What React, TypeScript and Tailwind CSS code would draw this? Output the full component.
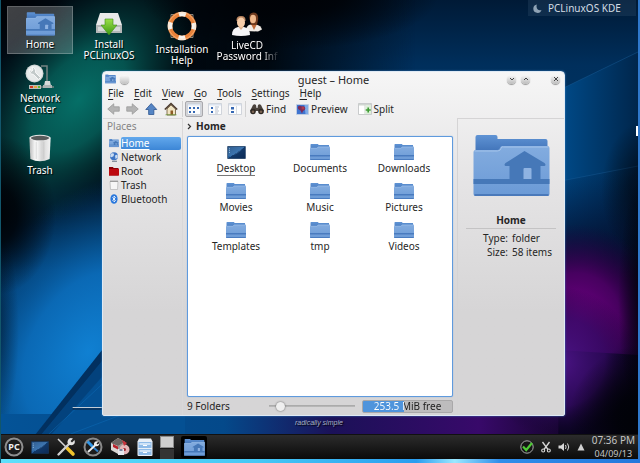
import type { ReactNode } from 'react';

const places = ['Home', 'Network', 'Root', 'Trash', 'Bluetooth'];

const files = [
  'Desktop', 'Documents', 'Downloads',
  'Movies', 'Music', 'Pictures',
  'Templates', 'tmp', 'Videos',
];

const menus = ['File', 'Edit', 'View', 'Go', 'Tools', 'Settings', 'Help'];

/* ---------- gradients shared by the icons ---------- */

function Defs() {
  return (
    <svg className="absolute w-0 h-0" aria-hidden="true">
      <defs>
        <linearGradient id="folderFront" x1="0" y1="0" x2="0" y2="1">
          <stop offset="0" stopColor="#83acdf" />
          <stop offset="1" stopColor="#6b9ad6" />
        </linearGradient>
        <linearGradient id="folderBack" x1="0" y1="0" x2="0" y2="1">
          <stop offset="0" stopColor="#5f93d4" />
          <stop offset="1" stopColor="#3b6db3" />
        </linearGradient>
        <linearGradient id="metal" x1="0" y1="0" x2="1" y2="0">
          <stop offset="0" stopColor="#b9b9b9" />
          <stop offset="0.3" stopColor="#ffffff" />
          <stop offset="0.6" stopColor="#d4d4d4" />
          <stop offset="1" stopColor="#f4f4f4" />
        </linearGradient>
        <linearGradient id="screen" x1="0" y1="0" x2="1" y2="1">
          <stop offset="0" stopColor="#163d6d" />
          <stop offset="0.5" stopColor="#2a66a4" />
          <stop offset="0.51" stopColor="#12396a" />
          <stop offset="1" stopColor="#0c2a55" />
        </linearGradient>
        <linearGradient id="greenArrow" x1="0" y1="0" x2="0" y2="1">
          <stop offset="0" stopColor="#9be04a" />
          <stop offset="1" stopColor="#3f9a12" />
        </linearGradient>
      </defs>
    </svg>
  );
}

/* ---------- icons ---------- */

function Folder({ className }: { className: string }) {
  return (
    <svg viewBox="0 0 20 18" className={className} aria-hidden="true">
      <path d="M.5 1.500 1 1h7l.6 1H19v8H.5z" fill="url(#folderBack)" />
      <path d="M0 5h7l1-1.300h12V16.400l-.6.6H.6L0 16.400z" fill="url(#folderFront)" />
      <path d="M0 12.200h20v1.200H0z" fill="#3f72b8" />
      <path d="M.3 16.500h19.400" stroke="#4a7cc0" strokeWidth="1" />
      <path d="M0 5.200h7l1-1.200h12" stroke="#a5c5ec" strokeWidth=".5" fill="none" />
    </svg>
  );
}

function HomeFolder({ className }: { className: string }) {
  return (
    <svg viewBox="0 0 76 62" className={className} aria-hidden="true">
      <path d="M2 2q0-2 2-2h18q2 0 2 2v2h48q2 0 2 2v14H2z" fill="url(#folderBack)" />
      <path d="M0 17q0-2 2-2h22q2 0 2.500-2t2.500-2h45q2 0 2 2v46q0 2-2 2H2q-2 0-2-2z" fill="url(#folderFront)" />
      <path d="M0 44h36V31h-4q-2-1 0-3l19-12 20 12q2 2 0 3h-4v13h9v5H0z" fill="#4678b8" />
      <path d="M51 33h6q1 0 1 1v10h-8V34q0-1 1-1z" fill="#8fb3e2" />
      <path d="M1 60h74" stroke="#4a79ba" strokeWidth="2" />
      <path d="M1 16h23q3 0 3.500-2.500T30 12h45" stroke="#a3c3ea" strokeWidth="1" fill="none" />
    </svg>
  );
}

function InstallIcon() {
  return (
    <svg viewBox="0 0 28 24" className="w-7 h-6" aria-hidden="true">
      <path d="M5 1h18l4 12v7q0 1-1 1H2q-1 0-1-1v-7z" fill="#e9e9e9" />
      <path d="M1 13h26v7q0 1-1 1H2q-1 0-1-1z" fill="#b4b7b7" />
      <path d="M3 15h22v4H3z" fill="#d6d8d8" />
      <path d="M10 7h8v6h4l-8 10-8-10h4z" fill="url(#greenArrow)" stroke="#3c8a18" strokeWidth=".6" />
    </svg>
  );
}

function LifebuoyIcon() {
  return (
    <svg viewBox="0 0 30 30" className="w-[30px] h-[30px]" aria-hidden="true">
      <path d="M4 3.500h22v23H4z" fill="none" stroke="#a9a294" strokeWidth=".8" />
      <circle cx="15" cy="15" r="12" fill="none" stroke="#e8823a" strokeWidth="4.600" />
      <circle cx="15" cy="15" r="12" fill="none" stroke="#f6f3ee" strokeWidth="4.600" strokeDasharray="7 11.850" strokeDashoffset="3.500" />
      <circle cx="15" cy="15" r="13.300" fill="none" stroke="#ffd0a0" strokeWidth=".7" opacity=".7" />
    </svg>
  );
}

function UsersIcon() {
  return (
    <svg viewBox="0 0 30 25" className="w-[30px] h-[25px]" aria-hidden="true">
      <path d="M14 19q0-6 5-6.500h5q5 1 6 5l-4 2z" fill="#f1ece6" />
      <path d="M19 12l3 6 3-6z" fill="#c06a38" />
      <path d="M17.500 7q-1-6 4-6.500Q27 1 26 8l-1 5h-6z" fill="#6e3a1e" />
      <ellipse cx="21" cy="7" rx="3" ry="4.300" fill="#f0b98c" />
      <path d="M0 23q0-7 6-8h6q6 1 6 8-9 2-18 0z" fill="#f5f5f7" />
      <path d="M6 14.500 9 18l3-3.500z" fill="#dcb18e" />
      <path d="M4.500 9Q4 4 9 4t4.500 5z" fill="#b98560" />
      <ellipse cx="9" cy="10.500" rx="4" ry="5" fill="#f6cda9" />
    </svg>
  );
}

function NetworkCenterIcon() {
  return (
    <svg viewBox="0 0 30 26" className="w-[30px] h-[26px]" aria-hidden="true">
      <path d="M16 2h6v19M9 23h20" stroke="#768383" strokeWidth="1.500" fill="none" />
      <path d="M20 17h5l1 5h-7z" fill="#d7dada" />
      <path d="M18 21h9v3h-9z" fill="#aeb4b4" />
      <path d="M4 21h12v4H4z" fill="#b8bcb8" />
      <path d="M5 22h3v2H5z" fill="#d33b22" />
      <path d="M9 22h3v2H9z" fill="#e9a63b" />
      <path d="M13 22h2v2h-2z" fill="#5dbb35" />
      <circle cx="9.500" cy="9.500" r="9" fill="#d3d8d8" />
      <circle cx="9.500" cy="9.500" r="7.800" fill="#e8ebeb" />
      <path d="M5 5q-1 5 3.500 5.500l5 5 2-2-5-5Q11 4 7 3l1 3-1.500 1.500z" fill="#c3caca" stroke="#fff" strokeWidth=".8" />
    </svg>
  );
}

function TrashIcon({ className }: { className: string }) {
  return (
    <svg viewBox="0 0 24 29" className={className} aria-hidden="true">
      <path d="M1 4h22l-1 22q-10 4.500-20 0z" fill="url(#metal)" />
      <ellipse cx="12" cy="4" rx="11" ry="3.200" fill="#e6e6e6" />
      <ellipse cx="12" cy="4.200" rx="9.500" ry="2.300" fill="#575b5b" />
      <path d="M8 8v18M16 8v18" stroke="#c2c2c2" strokeWidth=".7" />
    </svg>
  );
}

function Monitor({ className }: { className: string }) {
  return (
    <svg viewBox="0 0 20 14" className={className} aria-hidden="true">
      <path d="M.5.5h19v13H.5z" fill="url(#screen)" stroke="#16365f" strokeWidth=".8" />
      <path d="M1 1h17Q12 10 1 11z" fill="#5a8cc0" opacity=".4" />
      <path d="M2 3h1M2 5h1M2 7h1" stroke="#b6dcf5" strokeWidth=".8" />
    </svg>
  );
}

function Arrow({ dir }: { dir: 'left' | 'right' | 'up' }) {
  const d = {
    left: 'M.5 6 6.500.8v3H12v4.400H6.500v3z',
    right: 'M12 6 6 .8v3H.5v4.400H6v3z',
    up: 'M6 .5 11.500 6.500H8.600v5H3.400v-5H.5z',
  };
  const up = dir === 'up';
  return (
    <svg viewBox="0 0 12.500 12" className="w-[13px] h-3" aria-hidden="true">
      <path d={d[dir]} fill={up ? '#5585c4' : '#b4b4b4'} stroke={up ? '#2d5690' : '#9a9a9a'} strokeWidth=".8" />
    </svg>
  );
}

function HouseIcon() {
  return (
    <svg viewBox="0 0 14 14" className="w-3.5 h-3.5" aria-hidden="true">
      <path d="M3 7v6h8.500V7L7 3z" fill="#efe3c2" stroke="#6c5636" strokeWidth=".8" />
      <path d="M.8 7.500 7 1.500l6.200 6" fill="none" stroke="#4b3a2c" strokeWidth="1.600" />
      <path d="M6.500 8.500H9V13H6.500z" fill="#8c5a24" />
      <path d="M1.500 12.800h11" stroke="#6b9a3b" strokeWidth=".8" />
    </svg>
  );
}

function ViewIcon({ kind }: { kind: 'icons' | 'details' | 'columns' }) {
  return (
    <svg viewBox="0 0 14 12" className="w-3.5 h-3" aria-hidden="true">
      <path d="M.5.5h13v11H.5z" fill="#fbfcfd" stroke="#c6ccd4" strokeWidth=".8" />
      <path d="M1 1h12v1.500H1z" fill="#dbe3ee" />
      {kind === 'icons' && (
        <path d="M2 4h2v2H2zM6 4h2v2H6zM10 4h2v2h-2zM2 8h2v2H2zM6 8h2v2H6z" fill="#3568b4" />
      )}
      {kind === 'details' && (
        <>
          <path d="M3 4h2v2H3zM3 8h2v2H3z" fill="#3568b4" />
          <path d="M7 4h4M7 6h3M7 8h4M7 10h3" stroke="#a9b3c0" strokeWidth=".8" />
        </>
      )}
      {kind === 'columns' && (
        <>
          <path d="M3 4h3v2.500H3zM3 8h3v2H3z" fill="#3568b4" />
          <path d="M8.500 3v8" stroke="#ccd3dc" strokeWidth=".8" />
        </>
      )}
    </svg>
  );
}

function FindIcon() {
  return (
    <svg viewBox="0 0 14 12" className="w-3.5 h-3" aria-hidden="true">
      <path d="M3 2q1.500-1.500 3 0l.5 3h1L8 2q1.500-1.500 3 0l3 6H0z" fill="#4a423c" />
      <circle cx="3" cy="8.500" r="2.800" fill="#2d2723" />
      <circle cx="11" cy="8.500" r="2.800" fill="#2d2723" />
      <circle cx="3" cy="8.800" r="1.300" fill="#7c6453" />
      <circle cx="11" cy="8.800" r="1.300" fill="#7c6453" />
    </svg>
  );
}

function PreviewIcon() {
  return (
    <svg viewBox="0 0 13 11" className="w-[13px] h-[11px]" aria-hidden="true">
      <path d="M.5.5h12v10H.5z" fill="#3f74d0" stroke="#c9d3e2" strokeWidth=".8" />
      <path d="M8.500 1H12v9H9.500z" fill="#7fabe6" />
      <path d="M2 2.500q2-1.500 4 0 2-1 3 1T7 7L6 9.500 4.500 6.500Q1 5 2 2.500z" fill="#7c2b5a" />
      <circle cx="7" cy="4" r="1.500" fill="#b13a4a" />
    </svg>
  );
}

function SplitIcon() {
  return (
    <svg viewBox="0 0 14 12" className="w-3.5 h-3" aria-hidden="true">
      <path d="M.5.5h13v11H.5z" fill="#fff" stroke="#bcbfc0" strokeWidth=".8" />
      <path d="M1 1h12v1.500H1zM6.500 2h1v9h-1z" fill="#cfd6d0" />
      <path d="M7.500 2.500H13V11H7.500z" fill="#dcefd8" />
      <path d="M10.200 4.500v5M7.700 7h5" stroke="#3f9c34" strokeWidth="1.600" />
    </svg>
  );
}

function PlaceIcon({ name }: { name: string }) {
  if (name === 'Home') return <HomeFolder className="w-2.5 h-2.5" />;
  return (
    <svg viewBox="0 0 10 10" className="w-2.5 h-2.5" aria-hidden="true">
      {name === 'Network' && (
        <>
          <circle cx="5" cy="4.200" r="4" fill="#3d74c4" />
          <path d="M2 1.500q3-1 3 1T3 5 1.200 4zM6 3.500l2.500-1 .3 3L6.500 7z" fill="#c9dcf2" />
          <path d="M3 9.300h5" stroke="#7d8893" strokeWidth="1.200" />
        </>
      )}
      {name === 'Root' && (
        <>
          <path d="M0 1h4l.6 1H9.500v7.500H0z" fill="#8a0006" />
          <path d="M0 3h10v6.500H0z" fill="#bd0a10" />
        </>
      )}
      {name === 'Trash' && (
        <>
          <path d="M1 1.500h8L8.500 9.500h-7z" fill="#f6f6f6" stroke="#b4b4b4" strokeWidth=".7" />
          <path d="M1 1.200h8" stroke="#8c8c8c" strokeWidth="1" />
        </>
      )}
      {name === 'Bluetooth' && (
        <>
          <ellipse cx="5" cy="5" rx="3.600" ry="4.800" fill="#2a78dc" />
          <path d="M3.400 3.400 6.500 6.500 5 8V2l1.500 1.500-3.100 3.100" stroke="#fff" strokeWidth=".8" fill="none" />
        </>
      )}
    </svg>
  );
}

/* ---------- wallpaper ---------- */

function Wallpaper() {
  return (
    <svg viewBox="0 0 640 434" preserveAspectRatio="none" className="absolute inset-0 w-full h-full" aria-hidden="true">
      <defs>
        <linearGradient id="base" x1="0" y1="0" x2="0" y2="1">
          <stop offset="0" stopColor="#001a36" />
          <stop offset=".15" stopColor="#002f5c" />
          <stop offset=".5" stopColor="#003a6c" />
          <stop offset="1" stopColor="#044a8a" />
        </linearGradient>
        <linearGradient id="leftShade" x1="0" y1="0" x2="1" y2="0">
          <stop offset="0" stopColor="#000a14" />
          <stop offset=".3" stopColor="#00080f" />
          <stop offset=".42" stopColor="#000408" stopOpacity=".9" />
          <stop offset=".65" stopColor="#000408" stopOpacity="0" />
        </linearGradient>
        <linearGradient id="fadeDown" x1="0" y1="0" x2="0" y2="1">
          <stop offset="0" stopColor="#fff" />
          <stop offset=".38" stopColor="#fff" />
          <stop offset=".62" stopColor="#000" />
        </linearGradient>
        <mask id="topOnly">
          <path d="M0 0h640v434H0z" fill="url(#fadeDown)" />
        </mask>
        <radialGradient id="teal" gradientUnits="userSpaceOnUse" cx="0" cy="0" r="1" gradientTransform="translate(78 100) rotate(-50) scale(150 88)">
          <stop offset="0" stopColor="#056f67" />
          <stop offset=".4" stopColor="#055a55" stopOpacity=".92" />
          <stop offset=".75" stopColor="#043c3c" stopOpacity=".45" />
          <stop offset="1" stopColor="#03302f" stopOpacity="0" />
        </radialGradient>
        <radialGradient id="blue" gradientUnits="userSpaceOnUse" cx="0" cy="0" r="1" gradientTransform="translate(88 352) rotate(-60) scale(190 130)">
          <stop offset="0" stopColor="#1080d2" />
          <stop offset=".45" stopColor="#0b6bb8" stopOpacity=".95" />
          <stop offset="1" stopColor="#06477f" stopOpacity="0" />
        </radialGradient>
        <radialGradient id="dark">
          <stop offset="0" stopColor="#000206" />
          <stop offset=".35" stopColor="#000206" stopOpacity=".85" />
          <stop offset="1" stopColor="#000206" stopOpacity="0" />
        </radialGradient>
        <radialGradient id="magenta">
          <stop offset="0" stopColor="#78008c" />
          <stop offset=".5" stopColor="#52006a" stopOpacity=".85" />
          <stop offset="1" stopColor="#200040" stopOpacity="0" />
        </radialGradient>
        <radialGradient id="violet">
          <stop offset="0" stopColor="#4c1487" />
          <stop offset=".6" stopColor="#330a63" stopOpacity=".8" />
          <stop offset="1" stopColor="#150636" stopOpacity="0" />
        </radialGradient>
        <linearGradient id="wedge" x1="0" y1="0" x2="1" y2="0">
          <stop offset="0" stopColor="#004a88" />
          <stop offset="1" stopColor="#00264c" />
        </linearGradient>
        <linearGradient id="nightfall" x1="0" y1="0" x2="0" y2="1">
          <stop offset="0" stopColor="#020c28" stopOpacity="0" />
          <stop offset=".28" stopColor="#040a28" stopOpacity=".75" />
          <stop offset=".42" stopColor="#0a0424" />
          <stop offset="1" stopColor="#0a0320" />
        </linearGradient>
        <linearGradient id="floor" x1="0" y1="0" x2="1" y2="0">
          <stop offset="0" stopColor="#045397" />
          <stop offset=".35" stopColor="#04498a" />
          <stop offset=".52" stopColor="#1b1158" />
          <stop offset=".75" stopColor="#38096a" />
          <stop offset=".9" stopColor="#120426" />
          <stop offset="1" stopColor="#000002" />
        </linearGradient>
      </defs>
      <path d="M0 0h640v434H0z" fill="url(#base)" />
      <path d="M0 0h640v434H0z" fill="url(#leftShade)" mask="url(#topOnly)" />
      <path d="M0 0h640v434H0z" fill="url(#teal)" />
      <path d="M0 0h640v434H0z" fill="url(#blue)" />
      <ellipse cx="0" cy="0" rx="70" ry="60" fill="url(#dark)" />
      <ellipse cx="290" cy="-5" rx="150" ry="55" fill="url(#dark)" />
      <ellipse cx="-5" cy="215" rx="60" ry="80" fill="url(#dark)" />
      <ellipse cx="-8" cy="330" rx="26" ry="110" fill="url(#dark)" opacity=".45" />

      {/* right side wedges */}
      <path d="M563 89 640 52v150h-77z" fill="url(#wedge)" />
      <path d="M563 181l77-15v270h-77z" fill="url(#wedge)" />
      <path d="M563 89 640 52M563 181l77-15" stroke="#1c609c" strokeWidth=".7" opacity=".6" />
      <path d="M563 181l77-15v268h-77z" fill="url(#nightfall)" />
      <ellipse cx="648" cy="190" rx="45" ry="70" fill="url(#dark)" opacity=".6" />
      <ellipse cx="578" cy="322" rx="90" ry="98" fill="url(#magenta)" />
      <path d="M0 414h640v20H0z" fill="url(#floor)" />
      <path d="M560 350l80 5v79h-80z" fill="#0a0320" />
      <ellipse cx="560" cy="362" rx="78" ry="75" fill="url(#violet)" />
      <ellipse cx="645" cy="420" rx="75" ry="75" fill="url(#dark)" />
      <ellipse cx="650" cy="300" rx="30" ry="130" fill="url(#dark)" opacity=".8" />

      {/* lower left fold */}
      <path d="M104 347 35 434h150v-60z" fill="#045093" />
      <path d="M104 347 35 434h6l63-76z" fill="#02264d" opacity=".75" />
      <path d="M104 358 41 434h10l53-60z" fill="#02264d" opacity=".3" />
      <path d="M104 382 48 434M160 400l-90 34" stroke="#0d6ab4" strokeWidth=".8" opacity=".7" />
      <path d="M72 407.500h32" stroke="#c3ccd6" strokeWidth="1.200" />
      <path d="M72 409h32" stroke="#0a1d36" strokeWidth="1" />
    </svg>
  );
}

/* ---------- desktop pieces ---------- */

function Shortcut({ label, place, children }: { label: string; place: string; children: ReactNode }) {
  return (
    <button
      className={`absolute flex flex-col items-center w-[66px] text-[10px] leading-[11px] text-white text-center whitespace-pre [text-shadow:1px_1px_1px_#000] ${place}`}
    >
      {children}
      <span className="pt-[3px]">{label}</span>
    </button>
  );
}

function WindowButton({ label, d }: { label: string; d: string }) {
  return (
    <button aria-label={label} className="flex items-center justify-center w-[9px] h-[9px] rounded-full bg-linear-to-b from-[#f8f8f8] to-[#bcbcbc] shadow-[0_1px_1px_#999]">
      <svg viewBox="0 0 8 8" className="w-2 h-2" aria-hidden="true">
        <path d={d} fill="none" stroke="#444" strokeWidth="1" />
      </svg>
    </button>
  );
}

function Toolbar() {
  return (
    <div className="flex items-center h-[18px] pl-1 text-[10px]">
      <div className="flex items-center gap-[6px] pr-1">
        <button aria-label="Back"><Arrow dir="left" /></button>
        <button aria-label="Forward"><Arrow dir="right" /></button>
        <button aria-label="Up"><Arrow dir="up" /></button>
        <button aria-label="Home"><HouseIcon /></button>
      </div>
      <div className="flex items-center gap-1 h-4 px-[2px] border-x border-[#d2d2d2]">
        <button aria-label="Icons" className="flex items-center justify-center w-[18px] h-4 rounded-xs border border-[#a8a8ac] bg-[#d4d5d9]">
          <ViewIcon kind="icons" />
        </button>
        <button aria-label="Details" className="px-px"><ViewIcon kind="details" /></button>
        <button aria-label="Columns" className="px-px"><ViewIcon kind="columns" /></button>
      </div>
      <div className="flex items-center gap-[10px] pl-1">
        <button className="flex items-center gap-[2px]"><FindIcon />Find</button>
        <button className="flex items-center gap-[2px]"><PreviewIcon />Preview</button>
        <button className="flex items-center gap-[2px]"><SplitIcon />Split</button>
      </div>
    </div>
  );
}

function FileManager() {
  return (
    <section className="absolute top-[71px] bottom-[18px] left-[101px] right-[73px] flex flex-col rounded-t-sm rounded-b-xs border border-[#dfeaf5] bg-linear-to-b from-[#f6f6f6] via-[#e6e5e6] via-30% to-[#d6d5d6] to-70% text-[#262626] shadow-[0_0_2px_#3f86c8]">
      <header className="relative flex items-center justify-between h-[14px] pl-[2px] pr-1">
        <div className="flex items-center gap-1">
          <HomeFolder className="w-[11px] h-[10px]" />
          <span className="w-[9px] h-[9px] rounded-full bg-linear-to-b from-[#fafafa] to-[#c0c0c0] shadow-[0_1px_1px_#999]" />
        </div>
        <h1 className="absolute inset-x-0 text-center text-[11px] leading-[13px] pointer-events-none">guest – Home</h1>
        <div className="flex items-center gap-[5px]">
          <WindowButton label="Minimize" d="M2 3l2 2 2-2" />
          <WindowButton label="Maximize" d="M2 5l2-2 2 2" />
          <span className="w-[11px]" />
          <WindowButton label="Close" d="M2 2l4 4M6 2 2 6" />
        </div>
      </header>

      <nav className="flex gap-[10px] h-[14px] pl-[5px] text-[10px] leading-[14px]">
        {menus.map((m) => (
          <button key={m}>
            <span className="underline underline-offset-2">{m[0]}</span>
            {m.slice(1)}
          </button>
        ))}
      </nav>

      <Toolbar />

      <div className="flex flex-1 min-h-0">
        <aside className="w-[80px] border-t border-r border-[#d9d8d9] text-[10px]">
          <h2 className="h-[17px] pl-1 leading-[15px] text-[#858585]">Places</h2>
          <ul>
            {places.map((p) => (
              <li key={p}>
                <button className="flex items-center w-full h-[14px] pl-[6px] pr-px gap-[2px]">
                  <PlaceIcon name={p} />
                  <span
                    className={
                      p === 'Home'
                        ? 'flex-1 text-left leading-[13px] rounded-xs bg-linear-to-b from-[#62a8ec] to-[#3c86d6] text-white underline underline-offset-2'
                        : 'flex-1 text-left leading-[13px]'
                    }
                  >
                    {p}
                  </span>
                </button>
              </li>
            ))}
          </ul>
        </aside>

        <main className="flex flex-col flex-1 px-1">
          <div className="flex items-center gap-1 h-[18px] pb-[2px] text-[10px]">
            <svg viewBox="0 0 5 7" className="w-[5px] h-[7px]" aria-hidden="true">
              <path d="M1 1l2.500 2.500L1 6" fill="none" stroke="#333" strokeWidth="1.200" />
            </svg>
            <button className="font-bold">Home</button>
          </div>
          <div className="flex-1 border border-[#5f9add] rounded-xs bg-white px-[6px] pt-[6px] shadow-[0_0_1px_#5f9add]">
            <div className="grid grid-cols-3">
              {files.map((f) => (
                <button key={f} className="flex flex-col items-center h-[39px] text-[10px] leading-[14px]">
                  <span className="flex items-center h-[18px]">
                    {f === 'Desktop' ? <Monitor className="w-[19px] h-[13px]" /> : <Folder className="w-5 h-[18px]" />}
                  </span>
                  <span className={f === 'Desktop' ? 'border-b border-[#777]' : ''}>{f}</span>
                </button>
              ))}
            </div>
          </div>
          <footer className="flex items-center justify-between h-[18px] text-[10px]">
            <span className="w-[74px]">9 Folders</span>
            <input
              type="range"
              aria-label="Icon size"
              defaultValue={10}
              className="w-[86px] h-[9px] appearance-none bg-[linear-gradient(#a5a5a5,#bcbcbc)] bg-[length:100%_2px] bg-center bg-no-repeat [&::-webkit-slider-thumb]:appearance-none [&::-webkit-slider-thumb]:w-[9px] [&::-webkit-slider-thumb]:h-[9px] [&::-webkit-slider-thumb]:rounded-full [&::-webkit-slider-thumb]:bg-[#efefef] [&::-webkit-slider-thumb]:shadow-[0_0_2px_#555]"
            />
            <div className="w-[91px] h-[13px] rounded-xs border border-[#a9a8a9] bg-linear-to-r from-[#4f94dc] from-46% to-[#bdbcbd] to-46%">
              <p className="text-center leading-[11px] text-transparent bg-clip-text bg-linear-to-r from-white from-46% to-[#1d1d1d] to-46%">
                253.5 MiB free
              </p>
            </div>
          </footer>
        </main>

        <aside className="w-[107px] border-t border-l border-[#d5d4d5] pt-4 text-[10px] leading-[14px]">
          <HomeFolder className="mx-auto w-[77px] h-[62px]" />
          <h2 className="mt-4 mx-2 pb-px border-b border-[#c4c3c4] text-center font-bold">Home</h2>
          <dl className="grid grid-cols-[50px_1fr] gap-x-1 pt-[2px]">
            <dt className="text-right">Type:</dt>
            <dd>folder</dd>
            <dt className="text-right">Size:</dt>
            <dd>58 items</dd>
          </dl>
        </aside>
      </div>
    </section>
  );
}

function Taskbar() {
  return (
    <footer className="relative flex items-center justify-between h-[25px] px-[3px] bg-linear-to-b from-[#2c2c2c] to-[#0b0b0b] border-t border-[#111]">
      <div className="flex items-center gap-[7px]">
        <button aria-label="Applications">
          <svg viewBox="0 0 20 20" className="w-5 h-5" aria-hidden="true">
            <circle cx="10" cy="10" r="8.500" fill="#1c1c1c" stroke="#8f8f8f" strokeWidth="2" />
            <text x="10" y="13" textAnchor="middle" fontSize="9" fontWeight="bold" fill="#eee" fontFamily="Noto Sans, sans-serif">PC</text>
          </svg>
        </button>
        <button aria-label="Show desktop"><Monitor className="w-[18px] h-[13px]" /></button>
        <button aria-label="Configure">
          <svg viewBox="0 0 20 20" className="w-5 h-5" aria-hidden="true">
            <path d="M2 2l8.500 8.500" stroke="#d7d7d7" strokeWidth="1.500" />
            <path d="M11 11l6 6" stroke="#f0c22c" strokeWidth="3.600" strokeLinecap="round" />
            <path d="M2.500 17.500 14 6" stroke="#cfcfcf" strokeWidth="2.400" strokeLinecap="round" />
            <path d="M17 1.500 14.500 4l1.500 1.500L18.500 3q1 3-1 4.500t-4.500 0-1-4.500 5-1.500z" fill="#e3e3e3" />
          </svg>
        </button>
        <button aria-label="Control center">
          <svg viewBox="0 0 20 20" className="w-5 h-5" aria-hidden="true">
            <circle cx="10" cy="10" r="8.500" fill="#1c1c1c" stroke="#8a8a8a" strokeWidth="2" />
            <path d="M4.500 4.500 10 10" stroke="#2f95e6" strokeWidth="3" />
            <path d="M10 10l5 4.500" stroke="#2c7cc7" strokeWidth="2" />
            <path d="M5 15l8-7.500" stroke="#eee" strokeWidth="1.800" />
            <path d="M15.500 4.500 13.500 6.500l1 1 2-1.500q0 3-3 3.200T11 6.500t4.500-2z" fill="#eee" />
          </svg>
        </button>
        <button aria-label="Package manager">
          <svg viewBox="0 0 20 20" className="w-5 h-5" aria-hidden="true">
            <path d="M1 6 8 1l7 4v8l-7 4-7-4z" fill="#d9d5d2" />
            <path d="M8 9v8l7-4V5z" fill="#9c9692" />
            <path d="M1 6 8 1l7 4-7 4z" fill="#6b6562" />
            <path d="M3 7l5 2.500v3L3 10z" fill="#b8202a" />
            <circle cx="14.500" cy="12.500" r="5" fill="#e5b5b8" />
            <circle cx="14.500" cy="12.500" r="1.500" fill="#a32831" />
            <path d="M12 3l2 6 3-3z" fill="#c8323c" />
            <path d="M8 12h6v6H8z" fill="#e8e8ee" />
            <path d="M9.500 12h3v2h-3z" fill="#7883a0" />
          </svg>
        </button>
        <button aria-label="File cabinet">
          <svg viewBox="0 0 16 18" className="w-4 h-[18px]" aria-hidden="true">
            <path d="M2 .5h12l1.500 3V17q0 1-1 1h-13q-1 0-1-1V3.500z" fill="#e8eff7" />
            <path d="M1.500 4h13v6h-13zM1.500 11h13v6h-13z" fill="#8fbbe8" />
            <path d="M2.500 5h11v2h-11zM2.500 12h11v2h-11z" fill="#cfe3f7" />
            <path d="M6 7.500h4M6 14.500h4" stroke="#fff" strokeWidth="1.200" />
          </svg>
        </button>
        <div className="flex flex-col gap-px">
          <button aria-label="Workspace 1" className="w-3.5 h-3 border border-[#8c8c8c] bg-[#cfcfcf]" />
          <button aria-label="Workspace 2" className="w-3.5 h-2.5 bg-[#343434]" />
        </div>
        <button aria-label="guest – Home" className="flex items-center justify-center w-[26px] h-[22px] rounded-xs bg-black">
          <HomeFolder className="w-[21px] h-[17px]" />
        </button>
      </div>

      <div className="flex items-center gap-[7px]">
        <button aria-label="Updates">
          <svg viewBox="0 0 14 14" className="w-3.5 h-3.5" aria-hidden="true">
            <circle cx="7" cy="7" r="6.200" fill="#151515" stroke="#aaa" strokeWidth="1" />
            <path d="M3 6.500 6.200 10 12 3" stroke="#4ecb35" strokeWidth="2.200" fill="none" />
          </svg>
        </button>
        <button aria-label="Clipboard">
          <svg viewBox="0 0 10 12" className="w-2.5 h-3" aria-hidden="true">
            <path d="M1.500 1 7 8.500M8.500 1 3 8.500" stroke="#d8d8d8" strokeWidth="1.300" />
            <circle cx="2.200" cy="9.500" r="1.500" fill="none" stroke="#d8d8d8" strokeWidth="1.100" />
            <circle cx="7.800" cy="9.500" r="1.500" fill="none" stroke="#d8d8d8" strokeWidth="1.100" />
          </svg>
        </button>
        <button aria-label="Volume">
          <svg viewBox="0 0 12 10" className="w-3 h-2.5" aria-hidden="true">
            <path d="M.5 3.500H3L6 1v8L3 6.500H.5z" fill="#d8d8d8" />
            <path d="M7.500 3q1.200 2 0 4M9.500 1.500q2.500 3.500 0 7" stroke="#d8d8d8" strokeWidth="1" fill="none" />
          </svg>
        </button>
        <button aria-label="Show hidden icons">
          <svg viewBox="0 0 8 8" className="w-2 h-2" aria-hidden="true">
            <path d="M4 .5 7.500 7.500h-7z" fill="#d0d0d0" />
          </svg>
        </button>
        <div className="text-center leading-[13px] text-[#c4c4c4]">
          <p className="text-[10px]">07:36 PM</p>
          <p className="text-[9px]">04/09/13</p>
        </div>
      </div>
    </footer>
  );
}

export default function App() {
  return (
    <div className="flex flex-col min-h-screen bg-black border-l border-[#12566b] font-['Noto_Sans',sans-serif]">
      <Defs />
      <div className="flex flex-col flex-1 border-r-2 border-[#2f78cc]">
        <div className="relative flex-1 overflow-hidden">
          <Wallpaper />

          <Shortcut label="Home" place="left-[6px] top-[6px] h-12 pt-[5px] border border-white/20 bg-linear-to-br from-white/25 to-white/20">
            <HomeFolder className="w-[29px] h-6" />
          </Shortcut>
          <Shortcut label={'Install\nPCLinuxOS'} place="left-[75px] top-[12px]">
            <InstallIcon />
          </Shortcut>
          <Shortcut label={'Installation\nHelp'} place="left-[148px] top-[11px]">
            <LifebuoyIcon />
          </Shortcut>
          <Shortcut label={'LiveCD\nPassword Inf'} place="left-[213px] top-[12px] [mask-image:linear-gradient(90deg,#000_70%,transparent)]">
            <UsersIcon />
          </Shortcut>
          <Shortcut label={'Network\nCenter'} place="left-[6px] top-[64px]">
            <NetworkCenterIcon />
          </Shortcut>
          <Shortcut label="Trash" place="left-[6px] top-[134px]">
            <TrashIcon className="w-6 h-7" />
          </Shortcut>

          <div className="absolute top-0 right-[2px] flex items-center gap-[6px] w-[108px] h-4 pl-[5px] bg-[#2a4a66]/35 text-[10px] text-[#d3dce4]">
            <svg viewBox="0 0 9 9" className="w-[9px] h-[9px]" aria-hidden="true">
              <path d="M4 .5a4.200 4.200 0 1 0 4.500 5.500Q5 7 4 4.500T4 .5z" fill="#8fa3b5" />
            </svg>
            PCLinuxOS KDE
          </div>
          <div className="absolute top-[126px] right-0 w-[2px] h-[10px] bg-white" />

          <FileManager />

          <p className="absolute bottom-[6px] left-[294px] font-['Liberation_Sans'] text-[7px] leading-[10px] italic text-[#a9b3c9] [text-shadow:1px_1px_1px_#000]">
            radically simple
          </p>
        </div>
        <Taskbar />
      </div>
      <div className="h-1 bg-[linear-gradient(90deg,#5fe0fb,#45c8f5_40%,#2a9df0_65%,#9be8ff_71%,#2f8eea_78%,#2478dc)]" />
    </div>
  );
}
